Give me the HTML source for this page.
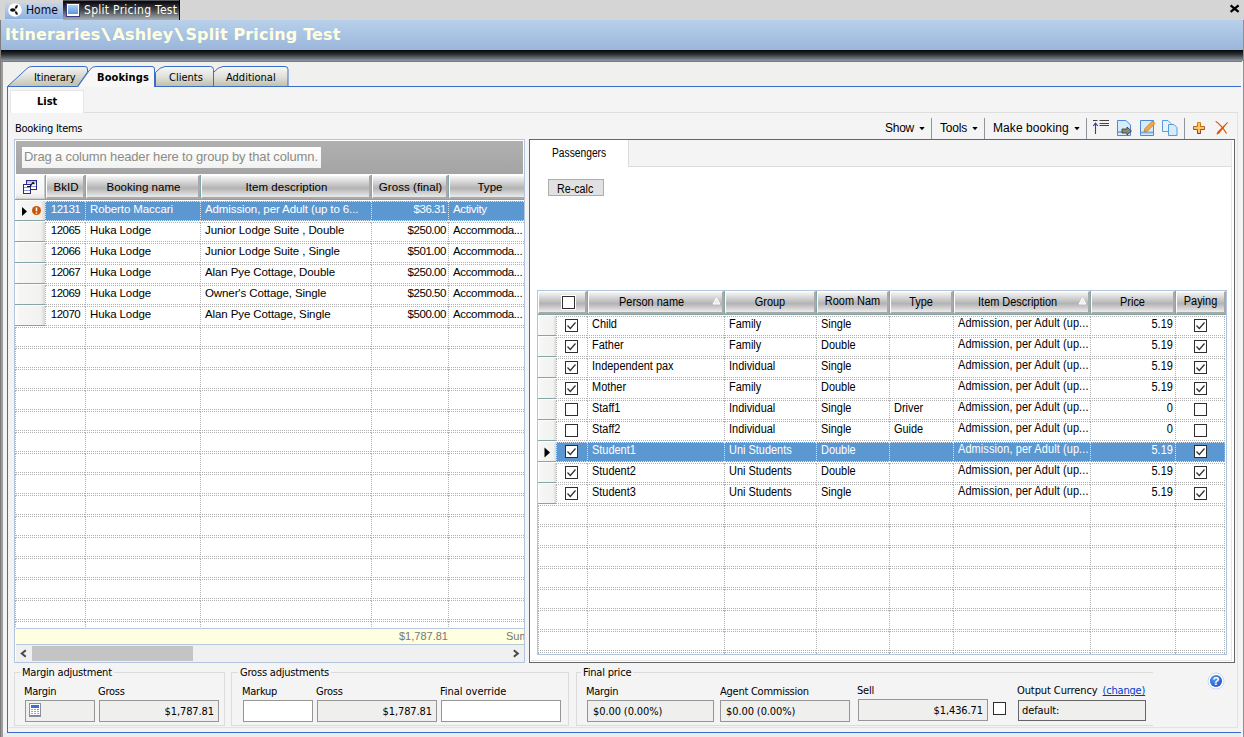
<!DOCTYPE html>
<html><head><meta charset="utf-8"><title>Split Pricing Test</title>
<style>
*{box-sizing:border-box;margin:0;padding:0}
html,body{width:1244px;height:737px;overflow:hidden}
body{position:relative;background:#f4f4f4;font-family:'DejaVu Sans Condensed','Liberation Sans',sans-serif;font-size:11px;color:#000}
.a{position:absolute}
.t{position:absolute;white-space:nowrap;line-height:1}
#strip{left:0;top:0;width:1244px;height:20px;background:#d5d5d5}
#home{left:5px;top:3px;width:58px;height:16px;background:linear-gradient(#c6d5e8,#8db1e0)}
#act{left:63px;top:0;width:117px;height:20px;background:linear-gradient(#8a8a92 0,#0c0c10 6%,#0e0e12 12%,#43474d 50%,#a8afb5);border-right:1px solid #000}
#title{left:1px;top:20px;width:1242px;height:30px;background:linear-gradient(#b8d0ea,#9ab6da)}
#dark{left:1px;top:50px;width:1242px;height:11px;background:linear-gradient(#050507,#2c3136 40%,#919aa1)}
.h{position:absolute;top:0;background:linear-gradient(#f6f6f6 0,#b3b3b3 58%,#ececec 100%);border-left:1px solid #fff;border-top:1px solid #fff;border-right:2px solid #a9a9a9;border-bottom:2px solid #a9a9a9;box-shadow:1px 0 0 #86a6a6;text-align:center;white-space:nowrap;overflow:hidden}
.hs{font-family:'Liberation Sans',sans-serif;font-size:11.5px;letter-spacing:0.05px;padding-left:2px}
.ha{font-family:'Liberation Sans',sans-serif;font-size:12.5px}
.w{width:114.29%;transform:scaleX(.875);transform-origin:0 0;white-space:nowrap;overflow:hidden}
.sx{display:inline-block;transform:scaleX(.875);transform-origin:0 50%}
.c{position:absolute;height:20px;border-left:1px dotted #b2b2b2;border-top:1px dotted #b2b2b2;border-bottom:1px dotted #b2b2b2;white-space:nowrap;overflow:hidden}
.ls .c{font-family:'Liberation Sans',sans-serif;font-size:11.5px;line-height:15px;letter-spacing:-0.1px;padding:0 3px 0 4px}
.rs .c{font-family:'Liberation Sans',sans-serif;font-size:12.5px;line-height:15px}
.rs .c .w{padding:0 3.5px 0 4.6px}
.rs .c.r .w{padding-right:2.5px}
.c.sel{background:#5b97d1;color:#fff;border-color:#d6e3f2}
.c.r{text-align:right}
.ls .c.r{letter-spacing:-0.45px;padding-right:2px}
.ls .c.m{letter-spacing:-0.5px;padding:0}
.ls .c.k{letter-spacing:-0.35px}
.c.m{text-align:center}
.c.last{border-right:1px dotted #b2b2b2}
.ind{position:absolute;height:20px;background:linear-gradient(90deg,#fff,#f6f6f4 15%,#f2f2f0 85%,#d8d8d8);border-top:1px solid #fcfcfc;box-shadow:0 1px 0 #86a6a6}
.cb{position:absolute;width:13px;height:13px;border:1px solid #2e2e2e;background:#fff}
.cb svg{position:absolute;left:0;top:0}
.gb{position:absolute;border:1px solid #dcdcdc}
.gl{position:absolute;background:#f4f4f4;padding:0 2px;white-space:nowrap;line-height:1;font-size:11px;letter-spacing:-0.2px}
.lb{letter-spacing:-0.25px}
.tb{position:absolute;height:22px;border:1px solid #969696;background:#fff;font-size:11px;line-height:21px;white-space:nowrap;letter-spacing:-0.1px}
.tb.r{text-align:right}
.ro{background:#efefee}
.sep{position:absolute;width:1px;background:#8e959d}
</style></head>
<body>
<div id="strip" class="a"></div>
<div id="home" class="a"></div>
<div id="act" class="a"></div>
<svg class="a" style="left:7px;top:2px" width="16" height="16" viewBox="0 0 16 16"><circle cx="8" cy="8" r="6.8" fill="#fff"/><ellipse cx="5.8" cy="8" rx="2.8" ry="1.8" fill="#111"/><path d="M7.8 6 Q8.2 3.2 10.6 2.8 Q11.6 5 9 6.9 Z" fill="#111"/><path d="M7.8 10 Q8.2 12.8 10.6 13.2 Q11.6 11 9 9.1 Z" fill="#111"/></svg>
<div class="t " style="left:26px;top:4px;font-size:12px;color:#0c0420">Home</div>
<div class="a" style="left:66px;top:3px;width:14px;height:14px;background:#fff;border:1px solid #3a3a8c"></div>
<div class="a" style="left:68px;top:5px;width:10px;height:9px;background:linear-gradient(#b0d0f0,#5896e0)"></div>
<div class="t " style="left:84px;top:4px;font-size:12px;color:#ffffee;letter-spacing:0.28px">Split Pricing Test</div>
<svg class="a" style="left:1229px;top:4px" width="11" height="9" viewBox="0 0 11 9"><path d="M1.6 1.4 L9.6 7.8 M9.6 1.4 L1.6 7.8" stroke="#000" stroke-width="2.3"/></svg>
<div class="a" style="left:0;top:20px;width:1px;height:717px;background:#7c7c7c;z-index:5"></div>
<div id="title" class="a"></div>
<div id="dark" class="a"></div>
<div class="t " style="left:5px;top:27px;font-family:'DejaVu Sans','Liberation Sans',sans-serif;font-weight:bold;font-size:16px;color:#ffffe1;letter-spacing:0.15px">Itineraries<span style="display:inline-block;transform:scaleX(1.6);margin:0 3px">\</span>Ashley<span style="display:inline-block;transform:scaleX(1.6);margin:0 3px">\</span>Split Pricing Test</div>
<div class="a" style="left:1243px;top:20px;width:1px;height:717px;background:#909090;z-index:5"></div>
<div class="a" style="left:1px;top:61px;width:1241px;height:1px;background:#7c7c7c"></div>
<div class="a" style="left:1px;top:62px;width:2px;height:675px;background:#9c9c9c"></div>
<div class="a" style="left:3px;top:62px;width:1238px;height:25px;background:#f0f0ee"></div>
<div class="a" style="left:1241px;top:62px;width:2px;height:675px;background:#f4f4f4"></div>
<svg class="a" style="left:0;top:62px" width="1244" height="30" viewBox="0 62 1244 30">
<defs><linearGradient id="tg" x1="0" y1="0" x2="0.25" y2="1"><stop offset="0" stop-color="#fdfdfd"/><stop offset="0.45" stop-color="#e6e6e2"/><stop offset="1" stop-color="#c3c3b0"/></linearGradient><linearGradient id="tg2" x1="0" y1="0" x2="0" y2="1"><stop offset="0" stop-color="#f8f8f8"/><stop offset="0.55" stop-color="#dededa"/><stop offset="1" stop-color="#bebea8"/></linearGradient></defs>
<path d="M7.5 86.5 L27 68.5 Q29 66.5 32 66.5 L85 66.5 Q87.5 66.5 87.5 69 L87.5 72 L77.5 86.5 Z" fill="url(#tg)" stroke="#3a6cc8" stroke-width="1"/>
<path d="M155.5 86.5 L155.5 72.5 Q160 67 165 66.5 L210.5 66.5 Q213.5 66.5 213.5 69.5 L213.5 86.5 Z" fill="url(#tg2)" stroke="#3a6cc8" stroke-width="1"/>
<path d="M213.5 86.5 L213.5 72.5 Q218 67 223 66.5 L285 66.5 Q288 66.5 288 69.5 L288 86.5 Z" fill="url(#tg2)" stroke="#3a6cc8" stroke-width="1"/>
<path d="M77.5 87 L90 69.5 Q92 66.5 96 66.5 L152 66.5 Q154.5 66.5 154.5 69 L154.5 87" fill="#f7f7f7" stroke="#3a6cc8" stroke-width="1"/>
<path d="M7.5 92 L7.5 86.5 L77.5 86.5 M154.5 86.5 L1241 86.5" fill="none" stroke="#3a6cc8" stroke-width="1"/>
</svg>
<div class="t " style="left:34px;top:72px;letter-spacing:-0.05px">Itinerary</div>
<div class="t " style="left:97px;top:72px;font-weight:bold;letter-spacing:0.1px">Bookings</div>
<div class="t " style="left:169px;top:72px;">Clients</div>
<div class="t " style="left:226px;top:72px;">Additional</div>
<div class="a" style="left:7px;top:87px;width:1px;height:646px;background:#3a6cc8"></div>
<div class="a" style="left:7px;top:732px;width:1234px;height:1px;background:#3a6cc8"></div>
<div class="a" style="left:3px;top:733px;width:1238px;height:4px;background:#ececec"></div>
<div class="a" style="left:1237px;top:112px;width:1px;height:616px;background:#e2e2e2"></div>
<div class="a" style="left:9px;top:727px;width:1229px;height:1px;background:#e2e2e2"></div>
<div class="a" style="left:10px;top:112px;width:1228px;height:1px;background:#dedede"></div>
<div class="a" style="left:10px;top:90px;width:74px;height:23px;background:#fff;border:1px solid #e6e6e6;border-bottom:none"></div>
<div class="t " style="left:37px;top:96px;font-weight:bold">List</div>
<div class="t " style="left:15px;top:123px;letter-spacing:-0.27px">Booking Items</div>
<div class="t " style="left:885px;top:122px;font-family:'Liberation Sans',sans-serif;font-size:12px;letter-spacing:-0.25px">Show</div>
<div class="t " style="left:940px;top:122px;font-family:'Liberation Sans',sans-serif;font-size:12px;letter-spacing:-0.2px">Tools</div>
<div class="t " style="left:993px;top:122px;font-family:'Liberation Sans',sans-serif;font-size:12px;letter-spacing:0.08px">Make booking</div>
<svg class="a" style="left:919px;top:127px" width="6" height="4"><path d="M0.3 0 L5.7 0 L3 3.2 Z" fill="#000"/></svg>
<svg class="a" style="left:972px;top:127px" width="6" height="4"><path d="M0.3 0 L5.7 0 L3 3.2 Z" fill="#000"/></svg>
<svg class="a" style="left:1074px;top:127px" width="6" height="4"><path d="M0.3 0 L5.7 0 L3 3.2 Z" fill="#000"/></svg>
<div class="sep" style="left:931px;top:118px;height:21px"></div>
<div class="sep" style="left:984px;top:118px;height:21px"></div>
<div class="sep" style="left:1086px;top:118px;height:21px"></div>
<div class="sep" style="left:1184px;top:118px;height:21px"></div>
<svg class="a" style="left:1092px;top:119px" width="18" height="18" viewBox="0 0 18 18"><path d="M3.5 15 L3.5 4.5 M1.2 7 L3.5 4.2 L5.8 7" stroke="#3a3a9a" stroke-width="1.1" fill="none"/><path d="M1 1.5 H5.5" stroke="#444" stroke-width="1"/><path d="M7.5 1.5 H17 M7.5 4.5 H17 M7.5 6.5 H17" stroke="#444" stroke-width="1"/></svg>
<svg class="a" style="left:1116px;top:119px" width="18" height="18" viewBox="0 0 18 18"><path d="M1.5 1.5 H10 L14.5 6 V16.5 H1.5 Z" fill="#d6ecfa" stroke="#4a8ad8"/><path d="M2 13 H14" stroke="#7ab0ea" stroke-width="2"/><path d="M6 10 H11 V8 L15.5 12 L11 16 V14 H6 Z" fill="#8a8a78" stroke="#333" stroke-width="0.8"/></svg>
<svg class="a" style="left:1139px;top:119px" width="18" height="18" viewBox="0 0 18 18"><path d="M1.5 1.5 H14.5 V16.5 H1.5 Z" fill="#d6ecfa" stroke="#4a8ad8"/><path d="M2 13.5 H14" stroke="#7ab0ea" stroke-width="2"/><path d="M5 13 L6 9.5 L13.5 2 L16 4.5 L8.5 12 Z" fill="#f0a848" stroke="#c87818" stroke-width="0.8"/></svg>
<svg class="a" style="left:1161px;top:119px" width="18" height="18" viewBox="0 0 18 18"><path d="M1.5 1.5 H7 L10 4.5 V12.5 H1.5 Z" fill="#e6f2fc" stroke="#5a98e0"/><path d="M7.5 5.5 H13 L16 8.5 V16.5 H7.5 Z" fill="#d6ecfa" stroke="#5a98e0"/></svg>
<svg class="a" style="left:1193px;top:122px" width="12" height="12" viewBox="0 0 12 12"><defs><linearGradient id="pg" x1="0" y1="0" x2="0" y2="1"><stop offset="0" stop-color="#d48a10"/><stop offset="1" stop-color="#8c3020"/></linearGradient></defs><path d="M4.5 0.5 H7.5 V4.5 H11.5 V7.5 H7.5 V11.5 H4.5 V7.5 H0.5 V4.5 H4.5 Z" fill="#ffc468" stroke="url(#pg)" stroke-width="1"/></svg>
<svg class="a" style="left:1214px;top:120px" width="16" height="16" viewBox="0 0 16 16"><path d="M2.6 14.4 Q2.4 13 4 11.2 L13.4 2 L14 2.6 L5.6 13 Q4 14.8 2.6 14.4 Z" fill="#dc5404"/><path d="M1.2 1.6 L2.2 1 Q8 5 12.9 13 L12.2 13.9 Q7 6 1.2 1.6 Z" fill="#dc5404"/></svg>
<div class="a" style="left:14px;top:139px;width:511px;height:524px;background:#fff;border:1px solid #b2c4de"></div>
<div class="a" style="left:16px;top:141px;width:507px;height:33px;background:linear-gradient(#b0b0b0,#a4a4a4)"></div>
<div class="a" style="left:22px;top:147px;width:299px;height:21px;background:linear-gradient(#fff,#f2f2f2)"></div>
<div class="t " style="left:24px;top:150px;font-family:'Liberation Sans',sans-serif;font-size:13px;color:#8c8c84;letter-spacing:-0.15px">Drag a column header here to group by that column.</div>
<div class="a" style="left:15px;top:175px;width:509px;height:24px;overflow:hidden">
<div class="h hs" style="left:0px;width:30px;height:24px;line-height:23px;background:linear-gradient(#fbfbfb,#f4f4f4 80%,#e4e4e4);border-right:1px solid #c8c8c8;border-bottom:1px solid #d0d0d0"></div>
<div class="h hs" style="left:31px;width:39px;height:24px;line-height:23px;">BkID</div>
<div class="h hs" style="left:71px;width:114px;height:24px;line-height:23px;">Booking name</div>
<div class="h hs" style="left:186px;width:170px;height:24px;line-height:23px;">Item description</div>
<div class="h hs" style="left:357px;width:76px;height:24px;line-height:23px;">Gross (final)</div>
<div class="h hs" style="left:434px;width:81px;height:24px;line-height:23px;">Type</div>
</div>
<div class="a" style="left:15px;top:199px;width:509px;height:1px;background:#86a6a6"></div>
<div class="a ls" style="left:15px;top:200px;width:509px;height:428px;overflow:hidden">
<div class="ind" style="left:0;top:0px;width:30px"></div>
<div class="c sel m" style="left:30px;top:1px;width:40px">12131</div>
<div class="c sel" style="left:70px;top:1px;width:115px">Roberto Maccari</div>
<div class="c sel" style="left:185px;top:1px;width:171px">Admission, per Adult (up to 6...</div>
<div class="c sel r" style="left:356px;top:1px;width:77px">$36.31</div>
<div class="c sel k" style="left:433px;top:1px;width:82px">Activity</div>
<div class="ind" style="left:0;top:21px;width:30px"></div>
<div class="c m" style="left:30px;top:22px;width:40px">12065</div>
<div class="c" style="left:70px;top:22px;width:115px">Huka Lodge</div>
<div class="c" style="left:185px;top:22px;width:171px">Junior Lodge Suite , Double</div>
<div class="c r" style="left:356px;top:22px;width:77px">$250.00</div>
<div class="c k" style="left:433px;top:22px;width:82px">Accommoda...</div>
<div class="ind" style="left:0;top:42px;width:30px"></div>
<div class="c m" style="left:30px;top:43px;width:40px">12066</div>
<div class="c" style="left:70px;top:43px;width:115px">Huka Lodge</div>
<div class="c" style="left:185px;top:43px;width:171px">Junior Lodge Suite , Single</div>
<div class="c r" style="left:356px;top:43px;width:77px">$501.00</div>
<div class="c k" style="left:433px;top:43px;width:82px">Accommoda...</div>
<div class="ind" style="left:0;top:63px;width:30px"></div>
<div class="c m" style="left:30px;top:64px;width:40px">12067</div>
<div class="c" style="left:70px;top:64px;width:115px">Huka Lodge</div>
<div class="c" style="left:185px;top:64px;width:171px">Alan Pye Cottage, Double</div>
<div class="c r" style="left:356px;top:64px;width:77px">$250.00</div>
<div class="c k" style="left:433px;top:64px;width:82px">Accommoda...</div>
<div class="ind" style="left:0;top:84px;width:30px"></div>
<div class="c m" style="left:30px;top:85px;width:40px">12069</div>
<div class="c" style="left:70px;top:85px;width:115px">Huka Lodge</div>
<div class="c" style="left:185px;top:85px;width:171px">Owner's Cottage, Single</div>
<div class="c r" style="left:356px;top:85px;width:77px">$250.50</div>
<div class="c k" style="left:433px;top:85px;width:82px">Accommoda...</div>
<div class="ind" style="left:0;top:105px;width:30px"></div>
<div class="c m" style="left:30px;top:106px;width:40px">12070</div>
<div class="c" style="left:70px;top:106px;width:115px">Huka Lodge</div>
<div class="c" style="left:185px;top:106px;width:171px">Alan Pye Cottage, Single</div>
<div class="c r" style="left:356px;top:106px;width:77px">$500.00</div>
<div class="c k" style="left:433px;top:106px;width:82px">Accommoda...</div>
<div class="c" style="left:0px;top:127px;width:70px"></div>
<div class="c" style="left:70px;top:127px;width:115px"></div>
<div class="c" style="left:185px;top:127px;width:171px"></div>
<div class="c" style="left:356px;top:127px;width:77px"></div>
<div class="c" style="left:433px;top:127px;width:82px"></div>
<div class="c" style="left:0px;top:148px;width:70px"></div>
<div class="c" style="left:70px;top:148px;width:115px"></div>
<div class="c" style="left:185px;top:148px;width:171px"></div>
<div class="c" style="left:356px;top:148px;width:77px"></div>
<div class="c" style="left:433px;top:148px;width:82px"></div>
<div class="c" style="left:0px;top:169px;width:70px"></div>
<div class="c" style="left:70px;top:169px;width:115px"></div>
<div class="c" style="left:185px;top:169px;width:171px"></div>
<div class="c" style="left:356px;top:169px;width:77px"></div>
<div class="c" style="left:433px;top:169px;width:82px"></div>
<div class="c" style="left:0px;top:190px;width:70px"></div>
<div class="c" style="left:70px;top:190px;width:115px"></div>
<div class="c" style="left:185px;top:190px;width:171px"></div>
<div class="c" style="left:356px;top:190px;width:77px"></div>
<div class="c" style="left:433px;top:190px;width:82px"></div>
<div class="c" style="left:0px;top:211px;width:70px"></div>
<div class="c" style="left:70px;top:211px;width:115px"></div>
<div class="c" style="left:185px;top:211px;width:171px"></div>
<div class="c" style="left:356px;top:211px;width:77px"></div>
<div class="c" style="left:433px;top:211px;width:82px"></div>
<div class="c" style="left:0px;top:232px;width:70px"></div>
<div class="c" style="left:70px;top:232px;width:115px"></div>
<div class="c" style="left:185px;top:232px;width:171px"></div>
<div class="c" style="left:356px;top:232px;width:77px"></div>
<div class="c" style="left:433px;top:232px;width:82px"></div>
<div class="c" style="left:0px;top:253px;width:70px"></div>
<div class="c" style="left:70px;top:253px;width:115px"></div>
<div class="c" style="left:185px;top:253px;width:171px"></div>
<div class="c" style="left:356px;top:253px;width:77px"></div>
<div class="c" style="left:433px;top:253px;width:82px"></div>
<div class="c" style="left:0px;top:274px;width:70px"></div>
<div class="c" style="left:70px;top:274px;width:115px"></div>
<div class="c" style="left:185px;top:274px;width:171px"></div>
<div class="c" style="left:356px;top:274px;width:77px"></div>
<div class="c" style="left:433px;top:274px;width:82px"></div>
<div class="c" style="left:0px;top:295px;width:70px"></div>
<div class="c" style="left:70px;top:295px;width:115px"></div>
<div class="c" style="left:185px;top:295px;width:171px"></div>
<div class="c" style="left:356px;top:295px;width:77px"></div>
<div class="c" style="left:433px;top:295px;width:82px"></div>
<div class="c" style="left:0px;top:316px;width:70px"></div>
<div class="c" style="left:70px;top:316px;width:115px"></div>
<div class="c" style="left:185px;top:316px;width:171px"></div>
<div class="c" style="left:356px;top:316px;width:77px"></div>
<div class="c" style="left:433px;top:316px;width:82px"></div>
<div class="c" style="left:0px;top:337px;width:70px"></div>
<div class="c" style="left:70px;top:337px;width:115px"></div>
<div class="c" style="left:185px;top:337px;width:171px"></div>
<div class="c" style="left:356px;top:337px;width:77px"></div>
<div class="c" style="left:433px;top:337px;width:82px"></div>
<div class="c" style="left:0px;top:358px;width:70px"></div>
<div class="c" style="left:70px;top:358px;width:115px"></div>
<div class="c" style="left:185px;top:358px;width:171px"></div>
<div class="c" style="left:356px;top:358px;width:77px"></div>
<div class="c" style="left:433px;top:358px;width:82px"></div>
<div class="c" style="left:0px;top:379px;width:70px"></div>
<div class="c" style="left:70px;top:379px;width:115px"></div>
<div class="c" style="left:185px;top:379px;width:171px"></div>
<div class="c" style="left:356px;top:379px;width:77px"></div>
<div class="c" style="left:433px;top:379px;width:82px"></div>
<div class="c" style="left:0px;top:400px;width:70px"></div>
<div class="c" style="left:70px;top:400px;width:115px"></div>
<div class="c" style="left:185px;top:400px;width:171px"></div>
<div class="c" style="left:356px;top:400px;width:77px"></div>
<div class="c" style="left:433px;top:400px;width:82px"></div>
<div class="c" style="left:0px;top:421px;width:70px"></div>
<div class="c" style="left:70px;top:421px;width:115px"></div>
<div class="c" style="left:185px;top:421px;width:171px"></div>
<div class="c" style="left:356px;top:421px;width:77px"></div>
<div class="c" style="left:433px;top:421px;width:82px"></div>
</div>
<svg class="a" style="left:22px;top:179px" width="16" height="16" viewBox="0 0 16 16"><rect x="4.5" y="1.5" width="10" height="9" fill="#fff" stroke="#2a2a8a"/><rect x="5" y="2" width="9" height="2.5" fill="#c4c8dc"/><path d="M5 7.5 H14" stroke="#8a9ad0"/><rect x="1.5" y="5.5" width="7" height="9" fill="#fff" stroke="#2a2a8a"/><path d="M2 8.5 H8 M2 11.5 H8" stroke="#8a9ad0"/><path d="M5 7.5 H8 L11 3.5" stroke="#111" stroke-width="1.2" fill="none"/><path d="M9.3 4.9 L11.4 2.4 L12.8 5.2 Z" fill="#111"/></svg>
<svg class="a" style="left:21px;top:206px" width="8" height="11"><path d="M1 1 L6 5.5 L1 10 Z" fill="#000"/></svg>
<svg class="a" style="left:32px;top:206px" width="9" height="9" viewBox="0 0 9 9"><circle cx="4.5" cy="4.5" r="4.5" fill="#cc5408"/><path d="M4.5 1.4 V5.3 M4.5 6.4 V7.7" stroke="#fff" stroke-width="1.5"/></svg>
<div class="a" style="left:16px;top:628px;width:508px;height:17px;background:#ffffe1;border-top:1px solid #b8c8dc;border-bottom:1px solid #b8c8dc;overflow:hidden">
<div class="t " style="left:383px;top:2px;font-family:'Liberation Sans',sans-serif;font-size:11px;color:#777">$1,787.81</div>
<div class="t " style="left:490px;top:2px;font-family:'Liberation Sans',sans-serif;font-size:11px;color:#777">Sum</div>
</div>
<div class="a" style="left:16px;top:645px;width:508px;height:17px;background:#f0f0f0"></div>
<div class="a" style="left:32px;top:646px;width:161px;height:15px;background:#c4c4c4"></div>
<svg class="a" style="left:20px;top:649px" width="8" height="9"><path d="M5.8 1.2 L1.8 4.5 L5.8 7.8" stroke="#484848" stroke-width="2" fill="none"/></svg>
<svg class="a" style="left:512px;top:649px" width="8" height="9"><path d="M1.8 1.2 L5.8 4.5 L1.8 7.8" stroke="#484848" stroke-width="2" fill="none"/></svg>
<div class="a" style="left:529px;top:139px;width:706px;height:524px;background:#fff;border:1px solid #666"></div>
<div class="a" style="left:1231px;top:141px;width:1px;height:520px;background:#e6e6e6"></div>
<div class="a" style="left:531px;top:660px;width:701px;height:1px;background:#e6e6e6"></div>
<div class="a" style="left:628px;top:140px;width:603px;height:27px;background:#f4f4f4;border-bottom:1px solid #dcdcdc;border-left:1px solid #dcdcdc"></div>
<div class="t " style="left:552px;top:147px;font-family:'Liberation Sans',sans-serif;font-size:12.5px"><span class="sx" style="transform:scaleX(.82)">Passengers</span></div>
<div class="a" style="left:548px;top:179px;width:56px;height:17px;background:#e1e1e1;border:1px solid #adadad"></div>
<div class="t " style="left:557px;top:183px;font-family:'Liberation Sans',sans-serif;font-size:12.5px"><span class="sx" style="transform:scaleX(.855)">Re-calc</span></div>
<div class="a" style="left:537px;top:290px;width:690px;height:365px;background:#fff;border:1px solid #b2c4de"></div>
<div class="a" style="left:538px;top:291px;width:688px;height:23px;overflow:hidden">
<div class="h ha" style="left:0px;width:49px;height:23px;line-height:20px;"><div class="w" style=""></div></div>
<div class="h ha" style="left:50px;width:136px;height:23px;line-height:20px;"><div class="w" style="padding-right:9px">Person name</div></div>
<div class="h ha" style="left:187px;width:91px;height:23px;line-height:20px;"><div class="w" style="">Group</div></div>
<div class="h ha" style="left:279px;width:72px;height:23px;line-height:18px;"><div class="w" style="">Room Nam</div></div>
<div class="h ha" style="left:352px;width:63px;height:23px;line-height:20px;"><div class="w" style="">Type</div></div>
<div class="h ha" style="left:416px;width:136px;height:23px;line-height:20px;"><div class="w" style="padding-right:9px">Item Description</div></div>
<div class="h ha" style="left:553px;width:84px;height:23px;line-height:20px;"><div class="w" style="">Price</div></div>
<div class="h ha" style="left:638px;width:50px;height:23px;line-height:18px;"><div class="w" style="">Paying</div></div>
</div>
<div class="a" style="left:538px;top:314px;width:688px;height:1px;background:#86a6a6"></div>
<div class="a rs" style="left:538px;top:315px;width:688px;height:339px;overflow:hidden">
<div class="ind" style="left:0;top:0px;width:18px"></div>
<div class="c" style="left:18px;top:1px;width:31px"></div>
<div class="c" style="left:49px;top:1px;width:137px"><div class="w">Child</div></div>
<div class="c" style="left:186px;top:1px;width:92px"><div class="w">Family</div></div>
<div class="c" style="left:278px;top:1px;width:73px"><div class="w">Single</div></div>
<div class="c" style="left:351px;top:1px;width:64px"></div>
<div class="c" style="left:415px;top:1px;width:137px"><div class="w"><span style="position:relative;top:-1px;letter-spacing:0.12px">Admission, per Adult (up...</span></div></div>
<div class="c r" style="left:552px;top:1px;width:85px"><div class="w">5.19</div></div>
<div class="c last" style="left:637px;top:1px;width:50px"></div>
<div class="ind" style="left:0;top:21px;width:18px"></div>
<div class="c" style="left:18px;top:22px;width:31px"></div>
<div class="c" style="left:49px;top:22px;width:137px"><div class="w">Father</div></div>
<div class="c" style="left:186px;top:22px;width:92px"><div class="w">Family</div></div>
<div class="c" style="left:278px;top:22px;width:73px"><div class="w">Double</div></div>
<div class="c" style="left:351px;top:22px;width:64px"></div>
<div class="c" style="left:415px;top:22px;width:137px"><div class="w"><span style="position:relative;top:-1px;letter-spacing:0.12px">Admission, per Adult (up...</span></div></div>
<div class="c r" style="left:552px;top:22px;width:85px"><div class="w">5.19</div></div>
<div class="c last" style="left:637px;top:22px;width:50px"></div>
<div class="ind" style="left:0;top:42px;width:18px"></div>
<div class="c" style="left:18px;top:43px;width:31px"></div>
<div class="c" style="left:49px;top:43px;width:137px"><div class="w">Independent pax</div></div>
<div class="c" style="left:186px;top:43px;width:92px"><div class="w">Individual</div></div>
<div class="c" style="left:278px;top:43px;width:73px"><div class="w">Single</div></div>
<div class="c" style="left:351px;top:43px;width:64px"></div>
<div class="c" style="left:415px;top:43px;width:137px"><div class="w"><span style="position:relative;top:-1px;letter-spacing:0.12px">Admission, per Adult (up...</span></div></div>
<div class="c r" style="left:552px;top:43px;width:85px"><div class="w">5.19</div></div>
<div class="c last" style="left:637px;top:43px;width:50px"></div>
<div class="ind" style="left:0;top:63px;width:18px"></div>
<div class="c" style="left:18px;top:64px;width:31px"></div>
<div class="c" style="left:49px;top:64px;width:137px"><div class="w">Mother</div></div>
<div class="c" style="left:186px;top:64px;width:92px"><div class="w">Family</div></div>
<div class="c" style="left:278px;top:64px;width:73px"><div class="w">Double</div></div>
<div class="c" style="left:351px;top:64px;width:64px"></div>
<div class="c" style="left:415px;top:64px;width:137px"><div class="w"><span style="position:relative;top:-1px;letter-spacing:0.12px">Admission, per Adult (up...</span></div></div>
<div class="c r" style="left:552px;top:64px;width:85px"><div class="w">5.19</div></div>
<div class="c last" style="left:637px;top:64px;width:50px"></div>
<div class="ind" style="left:0;top:84px;width:18px"></div>
<div class="c" style="left:18px;top:85px;width:31px"></div>
<div class="c" style="left:49px;top:85px;width:137px"><div class="w">Staff1</div></div>
<div class="c" style="left:186px;top:85px;width:92px"><div class="w">Individual</div></div>
<div class="c" style="left:278px;top:85px;width:73px"><div class="w">Single</div></div>
<div class="c" style="left:351px;top:85px;width:64px"><div class="w">Driver</div></div>
<div class="c" style="left:415px;top:85px;width:137px"><div class="w"><span style="position:relative;top:-1px;letter-spacing:0.12px">Admission, per Adult (up...</span></div></div>
<div class="c r" style="left:552px;top:85px;width:85px"><div class="w">0</div></div>
<div class="c last" style="left:637px;top:85px;width:50px"></div>
<div class="ind" style="left:0;top:105px;width:18px"></div>
<div class="c" style="left:18px;top:106px;width:31px"></div>
<div class="c" style="left:49px;top:106px;width:137px"><div class="w">Staff2</div></div>
<div class="c" style="left:186px;top:106px;width:92px"><div class="w">Individual</div></div>
<div class="c" style="left:278px;top:106px;width:73px"><div class="w">Single</div></div>
<div class="c" style="left:351px;top:106px;width:64px"><div class="w">Guide</div></div>
<div class="c" style="left:415px;top:106px;width:137px"><div class="w"><span style="position:relative;top:-1px;letter-spacing:0.12px">Admission, per Adult (up...</span></div></div>
<div class="c r" style="left:552px;top:106px;width:85px"><div class="w">0</div></div>
<div class="c last" style="left:637px;top:106px;width:50px"></div>
<div class="ind" style="left:0;top:126px;width:18px"></div>
<div class="c sel" style="left:18px;top:127px;width:31px"></div>
<div class="c sel" style="left:49px;top:127px;width:137px"><div class="w">Student1</div></div>
<div class="c sel" style="left:186px;top:127px;width:92px"><div class="w">Uni Students</div></div>
<div class="c sel" style="left:278px;top:127px;width:73px"><div class="w">Double</div></div>
<div class="c sel" style="left:351px;top:127px;width:64px"></div>
<div class="c sel" style="left:415px;top:127px;width:137px"><div class="w"><span style="position:relative;top:-1px;letter-spacing:0.12px">Admission, per Adult (up...</span></div></div>
<div class="c sel r" style="left:552px;top:127px;width:85px"><div class="w">5.19</div></div>
<div class="c sel last" style="left:637px;top:127px;width:50px"></div>
<div class="ind" style="left:0;top:147px;width:18px"></div>
<div class="c" style="left:18px;top:148px;width:31px"></div>
<div class="c" style="left:49px;top:148px;width:137px"><div class="w">Student2</div></div>
<div class="c" style="left:186px;top:148px;width:92px"><div class="w">Uni Students</div></div>
<div class="c" style="left:278px;top:148px;width:73px"><div class="w">Double</div></div>
<div class="c" style="left:351px;top:148px;width:64px"></div>
<div class="c" style="left:415px;top:148px;width:137px"><div class="w"><span style="position:relative;top:-1px;letter-spacing:0.12px">Admission, per Adult (up...</span></div></div>
<div class="c r" style="left:552px;top:148px;width:85px"><div class="w">5.19</div></div>
<div class="c last" style="left:637px;top:148px;width:50px"></div>
<div class="ind" style="left:0;top:168px;width:18px"></div>
<div class="c" style="left:18px;top:169px;width:31px"></div>
<div class="c" style="left:49px;top:169px;width:137px"><div class="w">Student3</div></div>
<div class="c" style="left:186px;top:169px;width:92px"><div class="w">Uni Students</div></div>
<div class="c" style="left:278px;top:169px;width:73px"><div class="w">Single</div></div>
<div class="c" style="left:351px;top:169px;width:64px"></div>
<div class="c" style="left:415px;top:169px;width:137px"><div class="w"><span style="position:relative;top:-1px;letter-spacing:0.12px">Admission, per Adult (up...</span></div></div>
<div class="c r" style="left:552px;top:169px;width:85px"><div class="w">5.19</div></div>
<div class="c last" style="left:637px;top:169px;width:50px"></div>
<div class="c" style="left:0px;top:190px;width:49px"></div>
<div class="c" style="left:49px;top:190px;width:137px"></div>
<div class="c" style="left:186px;top:190px;width:92px"></div>
<div class="c" style="left:278px;top:190px;width:73px"></div>
<div class="c" style="left:351px;top:190px;width:64px"></div>
<div class="c" style="left:415px;top:190px;width:137px"></div>
<div class="c" style="left:552px;top:190px;width:85px"></div>
<div class="c last" style="left:637px;top:190px;width:50px"></div>
<div class="c" style="left:0px;top:211px;width:49px"></div>
<div class="c" style="left:49px;top:211px;width:137px"></div>
<div class="c" style="left:186px;top:211px;width:92px"></div>
<div class="c" style="left:278px;top:211px;width:73px"></div>
<div class="c" style="left:351px;top:211px;width:64px"></div>
<div class="c" style="left:415px;top:211px;width:137px"></div>
<div class="c" style="left:552px;top:211px;width:85px"></div>
<div class="c last" style="left:637px;top:211px;width:50px"></div>
<div class="c" style="left:0px;top:232px;width:49px"></div>
<div class="c" style="left:49px;top:232px;width:137px"></div>
<div class="c" style="left:186px;top:232px;width:92px"></div>
<div class="c" style="left:278px;top:232px;width:73px"></div>
<div class="c" style="left:351px;top:232px;width:64px"></div>
<div class="c" style="left:415px;top:232px;width:137px"></div>
<div class="c" style="left:552px;top:232px;width:85px"></div>
<div class="c last" style="left:637px;top:232px;width:50px"></div>
<div class="c" style="left:0px;top:253px;width:49px"></div>
<div class="c" style="left:49px;top:253px;width:137px"></div>
<div class="c" style="left:186px;top:253px;width:92px"></div>
<div class="c" style="left:278px;top:253px;width:73px"></div>
<div class="c" style="left:351px;top:253px;width:64px"></div>
<div class="c" style="left:415px;top:253px;width:137px"></div>
<div class="c" style="left:552px;top:253px;width:85px"></div>
<div class="c last" style="left:637px;top:253px;width:50px"></div>
<div class="c" style="left:0px;top:274px;width:49px"></div>
<div class="c" style="left:49px;top:274px;width:137px"></div>
<div class="c" style="left:186px;top:274px;width:92px"></div>
<div class="c" style="left:278px;top:274px;width:73px"></div>
<div class="c" style="left:351px;top:274px;width:64px"></div>
<div class="c" style="left:415px;top:274px;width:137px"></div>
<div class="c" style="left:552px;top:274px;width:85px"></div>
<div class="c last" style="left:637px;top:274px;width:50px"></div>
<div class="c" style="left:0px;top:295px;width:49px"></div>
<div class="c" style="left:49px;top:295px;width:137px"></div>
<div class="c" style="left:186px;top:295px;width:92px"></div>
<div class="c" style="left:278px;top:295px;width:73px"></div>
<div class="c" style="left:351px;top:295px;width:64px"></div>
<div class="c" style="left:415px;top:295px;width:137px"></div>
<div class="c" style="left:552px;top:295px;width:85px"></div>
<div class="c last" style="left:637px;top:295px;width:50px"></div>
<div class="c" style="left:0px;top:316px;width:49px"></div>
<div class="c" style="left:49px;top:316px;width:137px"></div>
<div class="c" style="left:186px;top:316px;width:92px"></div>
<div class="c" style="left:278px;top:316px;width:73px"></div>
<div class="c" style="left:351px;top:316px;width:64px"></div>
<div class="c" style="left:415px;top:316px;width:137px"></div>
<div class="c" style="left:552px;top:316px;width:85px"></div>
<div class="c last" style="left:637px;top:316px;width:50px"></div>
<div class="c" style="left:0px;top:337px;width:49px"></div>
<div class="c" style="left:49px;top:337px;width:137px"></div>
<div class="c" style="left:186px;top:337px;width:92px"></div>
<div class="c" style="left:278px;top:337px;width:73px"></div>
<div class="c" style="left:351px;top:337px;width:64px"></div>
<div class="c" style="left:415px;top:337px;width:137px"></div>
<div class="c" style="left:552px;top:337px;width:85px"></div>
<div class="c last" style="left:637px;top:337px;width:50px"></div>
</div>
<div class="cb" style="left:562px;top:296px;box-shadow:0 0 0 1px #fff"></div>
<svg class="a" style="left:712px;top:297px" width="9" height="8"><path d="M4.5 1 L8 7 L1 7 Z" fill="#ececec" stroke="#fff" stroke-width="1"/></svg>
<svg class="a" style="left:1078px;top:297px" width="9" height="8"><path d="M4.5 1 L8 7 L1 7 Z" fill="#ececec" stroke="#fff" stroke-width="1"/></svg>
<div class="cb" style="left:565px;top:319px"><svg width="11" height="11" viewBox="0 0 11 11"><path d="M1.5 5.5 L4.3 8.5 L9.5 2.5" stroke="#333" stroke-width="1.3" fill="none"/></svg></div>
<div class="cb" style="left:1194px;top:319px"><svg width="11" height="11" viewBox="0 0 11 11"><path d="M1.5 5.5 L4.3 8.5 L9.5 2.5" stroke="#333" stroke-width="1.3" fill="none"/></svg></div>
<div class="cb" style="left:565px;top:340px"><svg width="11" height="11" viewBox="0 0 11 11"><path d="M1.5 5.5 L4.3 8.5 L9.5 2.5" stroke="#333" stroke-width="1.3" fill="none"/></svg></div>
<div class="cb" style="left:1194px;top:340px"><svg width="11" height="11" viewBox="0 0 11 11"><path d="M1.5 5.5 L4.3 8.5 L9.5 2.5" stroke="#333" stroke-width="1.3" fill="none"/></svg></div>
<div class="cb" style="left:565px;top:361px"><svg width="11" height="11" viewBox="0 0 11 11"><path d="M1.5 5.5 L4.3 8.5 L9.5 2.5" stroke="#333" stroke-width="1.3" fill="none"/></svg></div>
<div class="cb" style="left:1194px;top:361px"><svg width="11" height="11" viewBox="0 0 11 11"><path d="M1.5 5.5 L4.3 8.5 L9.5 2.5" stroke="#333" stroke-width="1.3" fill="none"/></svg></div>
<div class="cb" style="left:565px;top:382px"><svg width="11" height="11" viewBox="0 0 11 11"><path d="M1.5 5.5 L4.3 8.5 L9.5 2.5" stroke="#333" stroke-width="1.3" fill="none"/></svg></div>
<div class="cb" style="left:1194px;top:382px"><svg width="11" height="11" viewBox="0 0 11 11"><path d="M1.5 5.5 L4.3 8.5 L9.5 2.5" stroke="#333" stroke-width="1.3" fill="none"/></svg></div>
<div class="cb" style="left:565px;top:403px"></div>
<div class="cb" style="left:1194px;top:403px"></div>
<div class="cb" style="left:565px;top:424px"></div>
<div class="cb" style="left:1194px;top:424px"></div>
<div class="cb" style="left:565px;top:445px"><svg width="11" height="11" viewBox="0 0 11 11"><path d="M1.5 5.5 L4.3 8.5 L9.5 2.5" stroke="#333" stroke-width="1.3" fill="none"/></svg></div>
<div class="cb" style="left:1194px;top:445px"><svg width="11" height="11" viewBox="0 0 11 11"><path d="M1.5 5.5 L4.3 8.5 L9.5 2.5" stroke="#333" stroke-width="1.3" fill="none"/></svg></div>
<div class="cb" style="left:565px;top:466px"><svg width="11" height="11" viewBox="0 0 11 11"><path d="M1.5 5.5 L4.3 8.5 L9.5 2.5" stroke="#333" stroke-width="1.3" fill="none"/></svg></div>
<div class="cb" style="left:1194px;top:466px"><svg width="11" height="11" viewBox="0 0 11 11"><path d="M1.5 5.5 L4.3 8.5 L9.5 2.5" stroke="#333" stroke-width="1.3" fill="none"/></svg></div>
<div class="cb" style="left:565px;top:487px"><svg width="11" height="11" viewBox="0 0 11 11"><path d="M1.5 5.5 L4.3 8.5 L9.5 2.5" stroke="#333" stroke-width="1.3" fill="none"/></svg></div>
<div class="cb" style="left:1194px;top:487px"><svg width="11" height="11" viewBox="0 0 11 11"><path d="M1.5 5.5 L4.3 8.5 L9.5 2.5" stroke="#333" stroke-width="1.3" fill="none"/></svg></div>
<svg class="a" style="left:544px;top:447px" width="7" height="11"><path d="M0.5 0.5 L6 5.5 L0.5 10.5 Z" fill="#000"/></svg>
<div class="gb" style="left:14px;top:672px;width:211px;height:54px"></div>
<div class="gl" style="left:20px;top:667px">Margin adjustment</div>
<div class="gb" style="left:231px;top:672px;width:338px;height:54px"></div>
<div class="gl" style="left:238px;top:667px">Gross adjustments</div>
<div class="a" style="left:576px;top:672px;width:577px;height:54px;border:1px solid #dcdcdc;border-right:none"></div>
<div class="gl" style="left:581px;top:667px">Final price</div>
<div class="t lb" style="left:24px;top:686px;">Margin</div>
<div class="t lb" style="left:98px;top:686px;">Gross</div>
<div class="tb ro" style="left:25px;top:700px;width:70px"></div>
<div class="tb ro r" style="left:99px;top:700px;width:120px;padding-right:4px">$1,787.81</div>
<div class="t lb" style="left:242px;top:686px;">Markup</div>
<div class="t lb" style="left:316px;top:686px;">Gross</div>
<div class="t " style="left:440px;top:686px;letter-spacing:-0.05px">Final override</div>
<div class="tb" style="left:243px;top:700px;width:70px"></div>
<div class="tb ro r" style="left:317px;top:700px;width:120px;padding-right:4px">$1,787.81</div>
<div class="tb" style="left:441px;top:700px;width:120px"></div>
<div class="t lb" style="left:586px;top:686px;">Margin</div>
<div class="t lb" style="left:720px;top:686px;">Agent Commission</div>
<div class="t lb" style="left:857px;top:685px;">Sell</div>
<div class="tb ro" style="left:587px;top:700px;width:127px;padding-left:5px">$0.00 (0.00%)</div>
<div class="tb ro" style="left:720px;top:700px;width:130px;padding-left:5px">$0.00 (0.00%)</div>
<div class="tb ro r" style="left:858px;top:699px;width:130px;padding-right:4px">$1,436.71</div>
<div class="cb" style="left:993px;top:702px"></div>
<div class="t " style="left:1017px;top:685px;letter-spacing:-0.1px">Output Currency <span style="color:#0038c8;text-decoration:underline;margin-left:2px;letter-spacing:-0.2px">(change)</span></div>
<div class="tb ro" style="left:1018px;top:700px;width:128px;height:21px;line-height:19px;padding-left:3px;border-color:#666">default:</div>
<svg class="a" style="left:29px;top:703px" width="12" height="14" viewBox="0 0 12 14"><rect x="0.5" y="0.5" width="11" height="13" fill="#fff" stroke="#8c9299"/><path d="M1 12.5 H11" stroke="#7c848c"/><rect x="2" y="2" width="8" height="3" fill="#3f6fd0"/><path d="M2 6.5 H4 M5 6.5 H7 M2 8.5 H4 M5 8.5 H7 M8 8.5 H10 M2 10.5 H4 M5 10.5 H7 M8 10.5 H10" stroke="#a4a8ae"/><path d="M8 6.5 H10" stroke="#e07020"/></svg>
<svg class="a" style="left:1207px;top:672px" width="18" height="18" viewBox="0 0 18 18"><defs><radialGradient id="hg" cx="0.35" cy="0.3" r="0.8"><stop offset="0" stop-color="#5a98e8"/><stop offset="1" stop-color="#1f55c8"/></radialGradient></defs><circle cx="9" cy="9" r="8" fill="#fff" stroke="#b4d0f2" stroke-width="0.8"/><circle cx="9" cy="9" r="6.1" fill="url(#hg)"/><text x="9" y="13" font-family="Liberation Sans,sans-serif" font-size="11.5" font-weight="bold" fill="#fff" text-anchor="middle">?</text></svg>
</body></html>
